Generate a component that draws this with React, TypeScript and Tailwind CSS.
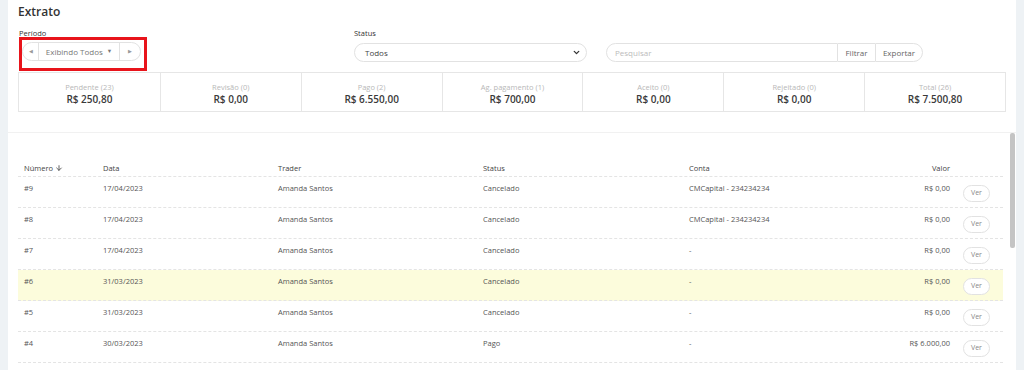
import { ChevronDown, ArrowDown } from "lucide-react";

const resumo = [
  { label: "Pendente (23)", valor: "R$ 250,80" },
  { label: "Revisão (0)", valor: "R$ 0,00" },
  { label: "Pago (2)", valor: "R$ 6.550,00" },
  { label: "Ag. pagamento (1)", valor: "R$ 700,00" },
  { label: "Aceito (0)", valor: "R$ 0,00" },
  { label: "Rejeitado (0)", valor: "R$ 0,00" },
  { label: "Total (26)", valor: "R$ 7.500,80" },
];

const linhas = [
  { n: "#9", data: "17/04/2023", status: "Cancelado", conta: "CMCapital - 234234234", valor: "R$ 0,00" },
  { n: "#8", data: "17/04/2023", status: "Cancelado", conta: "CMCapital - 234234234", valor: "R$ 0,00" },
  { n: "#7", data: "17/04/2023", status: "Cancelado", conta: "-", valor: "R$ 0,00" },
  { n: "#6", data: "31/03/2023", status: "Cancelado", conta: "-", valor: "R$ 0,00", destaque: true },
  { n: "#5", data: "31/03/2023", status: "Cancelado", conta: "-", valor: "R$ 0,00" },
  { n: "#4", data: "30/03/2023", status: "Pago", conta: "-", valor: "R$ 6.000,00" },
];

export default function App() {
  return (
    <div
      className="flex h-[370px] w-[1024px] overflow-hidden bg-[#eef2f5] px-2 text-[#444]"
      style={{ fontFamily: '"Open Sans", "Liberation Sans", sans-serif' }}
    >
      <div className="flex w-[1008px] flex-col bg-white">
        {/* filtros */}
        <div className="h-[133px] border-b border-[#f1f1f1] pl-[10px] pt-[3px]">
          <h1 className="text-[12px] font-semibold leading-[18px] text-[#333]">Extrato</h1>
          <div className="mt-[7px] flex items-start">
            <div className="w-[336px]">
              <div className="pl-[1px] text-[7.5px] leading-[10px] text-[#333]">Período</div>
              <div className="ml-[1px] mt-[-1px] w-[128px] border-[3px] border-[#e8141b] pb-[7px] pr-[3px] pt-[2px]">
                <div className="flex h-[19px] items-stretch rounded-full border border-[#e2e2e2] text-[8px] text-[#777]">
                  <div className="flex w-[16px] items-center justify-center border-r border-[#e2e2e2] text-[5px] text-[#999]">◀</div>
                  <div className="flex w-[81px] items-center justify-center gap-[4px] border-r border-[#e2e2e2]">
                    Exibindo Todos <span className="text-[5.5px] text-[#777]">▼</span>
                  </div>
                  <div className="flex flex-1 items-center justify-center text-[5px] text-[#999]">▶</div>
                </div>
              </div>
            </div>
            <div className="w-[252px]">
              <div className="text-[7.5px] leading-[10px] text-[#333]">Status</div>
              <div className="mt-[5px] flex h-[19px] w-[233px] items-center justify-between rounded-full border border-[#e2e2e2] pl-[10px] pr-[5px] text-[8px] text-[#444]">
                Todos
                <ChevronDown size={9} strokeWidth={3.5} className="text-[#333]" />
              </div>
            </div>
            <div className="mt-[15px] flex h-[19px] items-stretch text-[8px]">
              <div className="flex w-[232px] items-center rounded-l-full border border-[#e2e2e2] pl-[8px] text-[#bbb]">Pesquisar</div>
              <div className="flex w-[37px] items-center justify-center border-y border-[#e2e2e2] text-[#666]">Filtrar</div>
              <div className="flex w-[48px] items-center justify-center rounded-r-full border border-[#e2e2e2] text-[#666]">Exportar</div>
            </div>
          </div>
          <div className="mt-[1px] grid h-[40px] w-[988px] grid-cols-7 border border-[#e6e6e6]">
            {resumo.map((r, i) => (
              <div key={r.label} className={`flex flex-col items-center justify-center pt-[3px] ${i > 0 ? "border-l border-[#e6e6e6]" : ""}`}>
                <div className="text-[7.5px] leading-[11px] text-[#b8b8b8]">{r.label}</div>
                <div className="text-[10px] font-semibold leading-[12px] text-[#3a3a3a]">{r.valor}</div>
              </div>
            ))}
          </div>
        </div>

        {/* tabela */}
        <div className="flex flex-1">
          <div className="w-[1002px] pl-[10px] pt-[29px]">
            <div className="w-[985px] text-[7.5px]">
              <div className="flex h-[15px] items-start border-b border-dashed border-[#e4e4e4] leading-[12px] text-[#444]">
                <div className="flex w-[79px] items-center gap-[2px] pl-[6px]">
                  Número <ArrowDown size={8} strokeWidth={2.5} />
                </div>
                <div className="w-[175px] pl-[6px]">Data</div>
                <div className="w-[205px] pl-[6px]">Trader</div>
                <div className="w-[206px] pl-[6px]">Status</div>
                <div className="w-[167px] pl-[6px]">Conta</div>
                <div className="w-[106px] pr-[6px] text-right">Valor</div>
              </div>
              {linhas.map((l) => (
                <div
                  key={l.n}
                  className={`flex h-[31px] items-start border-b border-dashed border-[#e4e4e4] text-[#555] ${l.destaque ? "bg-[#fcfcdc]" : ""}`}
                >
                  <div className="w-[79px] pl-[6px] pt-[6px] leading-[10px]">{l.n}</div>
                  <div className="w-[175px] pl-[6px] pt-[6px] leading-[10px]">{l.data}</div>
                  <div className="w-[205px] pl-[6px] pt-[6px] leading-[10px]">Amanda Santos</div>
                  <div className="w-[206px] pl-[6px] pt-[6px] leading-[10px]">{l.status}</div>
                  <div className="w-[167px] pl-[6px] pt-[6px] leading-[10px]">{l.conta}</div>
                  <div className="w-[106px] pr-[6px] pt-[6px] text-right leading-[10px]">{l.valor}</div>
                  <div className="pl-[7px] pt-[8px]">
                    <div className="flex h-[17px] w-[27px] items-center justify-center rounded-full border border-[#e2e2e2] bg-white text-[7px] text-[#888]">
                      Ver
                    </div>
                  </div>
                </div>
              ))}
            </div>
          </div>
          <div className="w-[6px]">
            <div className="h-[115px] w-[5px] rounded-[2px] bg-[#c4c4c4]" />
          </div>
        </div>
      </div>
    </div>
  );
}
